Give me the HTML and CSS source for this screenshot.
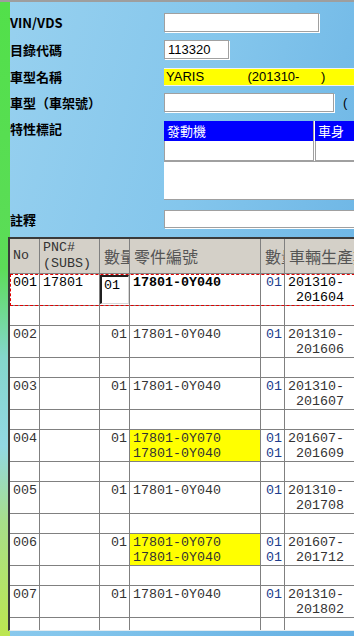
FILE: index.html
```html
<!DOCTYPE html>
<html lang="zh-Hant">
<head>
    <meta charset="UTF-8">
    <meta name="viewport" content="width=device-width, initial-scale=1.0">
    <title>零件目錄</title>
    <link rel="stylesheet" href="styles.css">
</head>
<body>
<div class="page">
    <div class="form">
        <div class="row row-vin">
            <span class="label">VIN/VDS</span>
            <input class="field field-vin" type="text">
        </div>
        <div class="row row-cat">
            <span class="label">目錄代碼</span>
            <input class="field field-cat" type="text" value="113320">
        </div>
        <div class="row row-model">
            <span class="label">車型名稱</span>
            <div class="model-name">YARIS            (201310-      )</div>
        </div>
        <div class="row row-frame">
            <span class="label">車型（車架號）</span>
            <input class="field field-frame" type="text">
            <span class="paren">(</span>
        </div>
        <div class="row row-spec">
            <span class="label label-spec">特性標記</span>
            <div class="spec">
                <div class="spec-row">
                    <span class="spec-head">發動機</span>
                    <span class="spec-head">車身</span>
                </div>
                <div class="spec-row">
                    <span class="spec-cell"></span>
                    <span class="spec-cell"></span>
                </div>
                <div class="spec-note"></div>
            </div>
        </div>
        <div class="row row-note">
            <span class="label">註釋</span>
            <input class="field field-note" type="text">
        </div>
    </div>

    <div class="parts">
        <table class="parts-table">
            <thead>
                <tr>
                    <th class="c-no">No</th>
                    <th class="c-pnc">PNC#<br>(SUBS)</th>
                    <th class="c-qty cjk">數量</th>
                    <th class="c-part cjk">零件編號</th>
                    <th class="c-num cjk">數量</th>
                    <th class="c-date cjk">車輛生產期間</th>
                </tr>
            </thead>
            <tbody>
                <tr class="item current">
                    <td>001</td>
                    <td>17801</td>
                    <td class="qty-edit"><input class="qty-input" type="text" value="01" readonly></td>
                    <td class="part">17801-0Y040</td>
                    <td class="num">01</td>
                    <td>201310-<br>&nbsp;201604</td>
                </tr>
                <tr class="gap"><td></td><td></td><td></td><td></td><td></td><td></td></tr>

                <tr class="item">
                    <td>002</td>
                    <td></td>
                    <td class="qty">01</td>
                    <td class="part">17801-0Y040</td>
                    <td class="num">01</td>
                    <td>201310-<br>&nbsp;201606</td>
                </tr>
                <tr class="gap"><td></td><td></td><td></td><td></td><td></td><td></td></tr>

                <tr class="item">
                    <td>003</td>
                    <td></td>
                    <td class="qty">01</td>
                    <td class="part">17801-0Y040</td>
                    <td class="num">01</td>
                    <td>201310-<br>&nbsp;201607</td>
                </tr>
                <tr class="gap"><td></td><td></td><td></td><td></td><td></td><td></td></tr>

                <tr class="item">
                    <td>004</td>
                    <td></td>
                    <td class="qty">01</td>
                    <td class="part hl">17801-0Y070<br>17801-0Y040</td>
                    <td class="num">01<br>01</td>
                    <td>201607-<br>&nbsp;201609</td>
                </tr>
                <tr class="gap"><td></td><td></td><td></td><td></td><td></td><td></td></tr>

                <tr class="item">
                    <td>005</td>
                    <td></td>
                    <td class="qty">01</td>
                    <td class="part">17801-0Y040</td>
                    <td class="num">01</td>
                    <td>201310-<br>&nbsp;201708</td>
                </tr>
                <tr class="gap"><td></td><td></td><td></td><td></td><td></td><td></td></tr>

                <tr class="item">
                    <td>006</td>
                    <td></td>
                    <td class="qty">01</td>
                    <td class="part hl">17801-0Y070<br>17801-0Y040</td>
                    <td class="num">01<br>01</td>
                    <td>201607-<br>&nbsp;201712</td>
                </tr>
                <tr class="gap"><td></td><td></td><td></td><td></td><td></td><td></td></tr>

                <tr class="item">
                    <td>007</td>
                    <td></td>
                    <td class="qty">01</td>
                    <td class="part">17801-0Y040</td>
                    <td class="num">01</td>
                    <td>201310-<br>&nbsp;201802</td>
                </tr>
                <tr class="gap"><td></td><td></td><td></td><td></td><td></td><td></td></tr>
            </tbody>
        </table>
    </div>
</div>
</body>
</html>
```

FILE: styles.css
```css
html, body {
    height: 100%;
}

body {
    margin: 0;
    overflow: hidden;
    font-family: "Liberation Sans", Arial, sans-serif;
}

.page {
    min-height: 100%;
    box-sizing: border-box;
    border-top: 2px solid #9e9e9e;
    background:
        linear-gradient(to bottom, #52e04a 0%, #5cdc58 42%, #84d6cc 56%, #92d8e4 70%, #a8df8a 82%, #bce650 100%) left top / 10px 100% no-repeat,
        linear-gradient(105deg, #98d1ef 0%, #84c6ec 45%, #6fb7e6 80%, #66b0e3 100%);
}

/* form */
.form {
    padding: 11px 0 0 10px;
}

.row {
    display: flex;
    align-items: flex-start;
}

.row > * {
    flex-shrink: 0;
}

.row-vin { height: 27px; }
.row-cat { height: 28px; }
.row-model { height: 25px; }
.row-frame { height: 28px; }
.row-spec { height: 89px; }
.row-note { height: 27px; }

.label {
    width: 154px;
    font-family: "Noto Sans CJK TC", sans-serif;
    font-weight: bold;
    font-size: 13px;
    line-height: 19px;
    color: #000;
}

.row-model .label {
    line-height: 18px;
}

.label-spec {
    line-height: 16px;
}

.field {
    box-sizing: border-box;
    height: 19px;
    margin: 0;
    padding: 0 3px;
    border: 1px solid #a0a0a0;
    box-shadow: 1px 1px 0 #fff;
    background: #fff;
    font-family: "Liberation Sans", Arial, sans-serif;
    font-size: 13px;
    color: #000;
}

.field-vin { width: 155px; }
.field-cat { width: 65px; }
.field-frame { width: 170px; }
.field-note { width: 250px; height: 18px; }

.model-name {
    box-sizing: border-box;
    width: 250px;
    height: 18px;
    padding-left: 2px;
    border-top: 1px solid #f2f2f2;
    border-bottom: 1px solid #f2f2f2;
    background: #ffff00;
    white-space: pre;
    font-size: 13px;
    line-height: 16px;
    color: #000;
}

.paren {
    margin-left: 9px;
    font-size: 13px;
    line-height: 19px;
    color: #000;
}

/* 特性標記 */
.spec {
    width: 260px;
    background: #fff;
}

.spec-row {
    display: flex;
}

.spec-head,
.spec-cell {
    box-sizing: border-box;
    width: 150px;
    margin-right: 1px;
    flex-shrink: 0;
}

.spec-head {
    height: 20px;
    padding-left: 3px;
    border-right: 1px solid #a0a0a0;
    background: #0000ff;
    color: #fff;
    font-family: "Noto Sans CJK TC", sans-serif;
    font-size: 13px;
    line-height: 20px;
}

.spec-cell {
    height: 20px;
    border-left: 1px solid #a0a0a0;
    border-right: 1px solid #a0a0a0;
    border-bottom: 1px solid #a0a0a0;
}

.spec-note {
    height: 39px;
    box-sizing: border-box;
    border-top: 1px solid #a0a0a0;
    border-bottom: 1px solid #a0a0a0;
}

/* parts list */
.parts {
    margin-left: 8px;
    height: 394px;
    box-sizing: border-box;
    border-top: 2px solid #3a3a3a;
    border-left: 2px solid #3a3a3a;
    border-bottom: 1px solid #e4ecf0;
    background: #fff;
    overflow: hidden;
}

.parts-table {
    width: 375px;
    table-layout: fixed;
    border-collapse: separate;
    border-spacing: 0;
    font-family: "Liberation Mono", "Courier New", monospace;
    font-size: 13.33px;
    line-height: 15px;
    color: #333;
}

.parts-table th,
.parts-table td {
    box-sizing: border-box;
    padding: 1px 3px 0;
    border-right: 1px solid #808080;
    border-bottom: 1px solid #808080;
    vertical-align: top;
    text-align: left;
    white-space: nowrap;
    overflow: hidden;
}

.parts-table th {
    height: 35px;
    padding-top: 0;
    background: #d4d0c8;
    font-weight: normal;
    line-height: 16px;
    vertical-align: middle;
}

.parts-table th.cjk {
    padding-left: 4px;
    font-family: "Noto Sans CJK TC", sans-serif;
    font-size: 16px;
    color: #555;
}

.c-no { width: 30px; }
.c-pnc { width: 60px; }
.c-qty { width: 30px; }
.c-part { width: 131px; }
.c-num { width: 24px; }
.c-date { width: 100px; }

.item { height: 32px; }
.gap { height: 20px; }

.parts-table td.qty {
    padding-right: 2px;
    text-align: right;
}

.parts-table td.num {
    padding-right: 2px;
    text-align: right;
    color: #203c8c;
}

.parts-table td.hl {
    background: #ffff00;
}

.current {
    outline: 1px dashed #e00000;
    outline-offset: -1px;
}

.current td {
    color: #000;
}

.current .part {
    font-weight: bold;
}

.parts-table td.qty-edit {
    padding: 1px 0 0;
}

.qty-input {
    position: relative;
    display: block;
    box-sizing: border-box;
    width: 29px;
    height: 29px;
    margin: 0;
    padding: 0 0 10px 2px;
    border-style: solid;
    border-width: 2px 1px 1px 2px;
    border-color: #202020 #d8d8d8 #d8d8d8 #202020;
    background: #fff;
    font: inherit;
    color: #000;
}
```
